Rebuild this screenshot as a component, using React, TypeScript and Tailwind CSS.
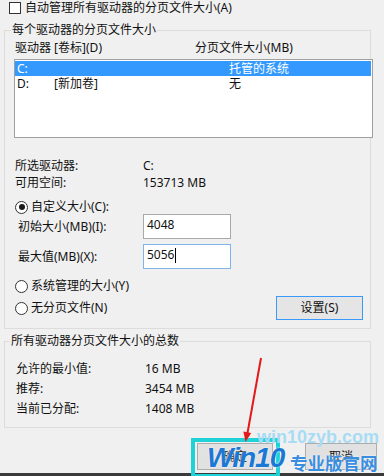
import React from "react";

function Radio({ checked }: { checked?: boolean }) {
  return (
    <span className="flex h-[13px] w-[13px] shrink-0 items-center justify-center rounded-full border border-[#333333] bg-white">
      {checked && <span className="h-[6px] w-[6px] rounded-full bg-[#1a1a1a]" />}
    </span>
  );
}

function InfoRow({ label, value, h, pl, w }: { label: string; value: string; h: string; pl: string; w: string }) {
  return (
    <div className={`flex items-center ${h} ${pl}`}>
      <span className={w}>{label}</span>
      <span>{value}</span>
    </div>
  );
}

export default function App() {
  return (
    <div className="relative flex h-[476px] w-[384px] flex-col overflow-hidden bg-[#f0f0f0] font-['Noto_Sans','Noto_Sans_CJK_SC',sans-serif] text-[12px] leading-[14px] text-[#111111]">
      {/* auto manage checkbox */}
      <div className="flex h-[15px] items-center pl-[9px]">
        <span className="h-[12px] w-[12px] border border-[#333333] bg-white" />
        <span className="ml-[4px]">自动管理所有驱动器的分页文件大小(A)</span>
      </div>

      {/* per drive group */}
      <div className="ml-[4px] mt-[15px] h-[299px] w-[367px] border border-[#dcdcdc]">
        <div className="-mt-[8px] ml-[6px] w-fit bg-[#f0f0f0] px-[1px]">每个驱动器的分页文件大小</div>

        <div className="mt-[4px] flex pl-[10px]">
          <span className="w-[180px]">驱动器 [卷标](D)</span>
          <span>分页文件大小(MB)</span>
        </div>

        <div className="ml-[9px] mt-[4px] h-[79px] w-[359px] border border-[#a0a0a0] bg-white pt-[1px]">
          <div className="mr-[1px] flex h-[15px] items-center bg-[#3399ff] pl-[2px] text-white">
            <span className="w-[212px]">C:</span>
            <span>托管的系统</span>
          </div>
          <div className="flex h-[15px] items-center pl-[2px]">
            <span className="w-[37px]">D:</span>
            <span className="w-[175px]">[新加卷]</span>
            <span>无</span>
          </div>
        </div>

        <div className="mt-[19px]">
          <InfoRow label="所选驱动器:" value="C:" h="h-[17px]" pl="pl-[10px]" w="w-[128px]" />
          <InfoRow label="可用空间:" value="153713 MB" h="h-[17px]" pl="pl-[10px]" w="w-[128px]" />
        </div>

        <div className="mt-[9px] flex h-[14px] items-center pl-[10px]">
          <Radio checked />
          <span className="ml-[3px]">自定义大小(C):</span>
        </div>

        <div className="flex h-[25px] items-center pl-[13px]">
          <span className="w-[125px]">初始大小(MB)(I):</span>
          <div className="h-[25px] w-[88px] border border-[#a9a9a9] bg-white pl-[3px] pt-[3px]">4048</div>
        </div>
        <div className="mt-[5px] flex h-[25px] items-center pl-[13px]">
          <span className="w-[125px]">最大值(MB)(X):</span>
          <div className="flex h-[25px] w-[88px] items-start border border-[#7eb4ea] bg-white pl-[3px] pt-[3px]">
            <span>5056</span>
            <span className="ml-[1px] h-[15px] w-[1px] bg-black" />
          </div>
        </div>

        <div className="mt-[10px] flex h-[14px] items-center pl-[10px]">
          <Radio />
          <span className="ml-[3px]">系统管理的大小(Y)</span>
        </div>
        <div className="mt-[3px] flex h-[24px] items-center pl-[10px]">
          <Radio />
          <span className="ml-[3px]">无分页文件(N)</span>
          <div className="ml-auto mr-[7px] flex h-[24px] w-[87px] items-center justify-center border border-[#3c99fc] bg-[#e5e5e5]">
            设置(S)
          </div>
        </div>
      </div>

      {/* totals group */}
      <div className="ml-[4px] mt-[12px] h-[87px] w-[367px] border border-[#dcdcdc]">
        <div className="-mt-[8px] ml-[5px] w-fit bg-[#f0f0f0] px-[1px]">所有驱动器分页文件大小的总数</div>
        <div className="mt-[11px]">
          <InfoRow label="允许的最小值:" value="16 MB" h="h-[20px]" pl="pl-[11px]" w="w-[129px]" />
          <InfoRow label="推荐:" value="3454 MB" h="h-[20px]" pl="pl-[11px]" w="w-[129px]" />
          <InfoRow label="当前已分配:" value="1408 MB" h="h-[20px]" pl="pl-[11px]" w="w-[129px]" />
        </div>
      </div>

      {/* dialog buttons */}
      <div className="mt-[15px] flex h-[27px]">
        <div className="ml-[197px] flex w-[76px] items-center justify-center border border-[#adadad] bg-[#e1e1e1]">确定</div>
        <div className="ml-[32px] flex w-[72px] items-center justify-center border border-[#adadad] bg-[#e1e1e1]">取消</div>
      </div>

      <div className="mt-auto h-[3px] bg-[#3a3a3a]" />

      {/* annotation: highlight box + arrow */}
      <div className="absolute left-[191px] top-[438px] h-[40px] w-[89px] border-4 border-[#1fd2d8]" />
      <svg className="pointer-events-none absolute left-0 top-0" width="384" height="476" viewBox="0 0 384 476">
        <line x1="261" y1="358" x2="247.5" y2="433" stroke="#e3191c" strokeWidth="2" />
        <polygon points="245.5,442 251.2,432.9 243.4,431.5" fill="#e3191c" />
      </svg>

      {/* watermark */}
      <div className="absolute left-[257px] top-[428px] font-['Liberation_Sans',sans-serif] text-[18px] font-bold leading-[19px] text-[#a8dcf5]">
        win10zyb.com
      </div>
      <div className="absolute left-[207px] top-[442px] font-['Liberation_Sans',sans-serif] text-[28px] font-bold italic leading-[32px] tracking-[-1px] text-[#1b78d4] [text-shadow:0_0_2px_#ffffff]">
        Win10
      </div>
      <div className="absolute left-[290px] top-[452px] font-['Noto_Sans_CJK_SC',sans-serif] text-[17.5px] font-bold leading-[22px] text-[#3a8ee0] [text-shadow:0_0_2px_#ffffff]">
        专业版官网
      </div>
    </div>
  );
}
